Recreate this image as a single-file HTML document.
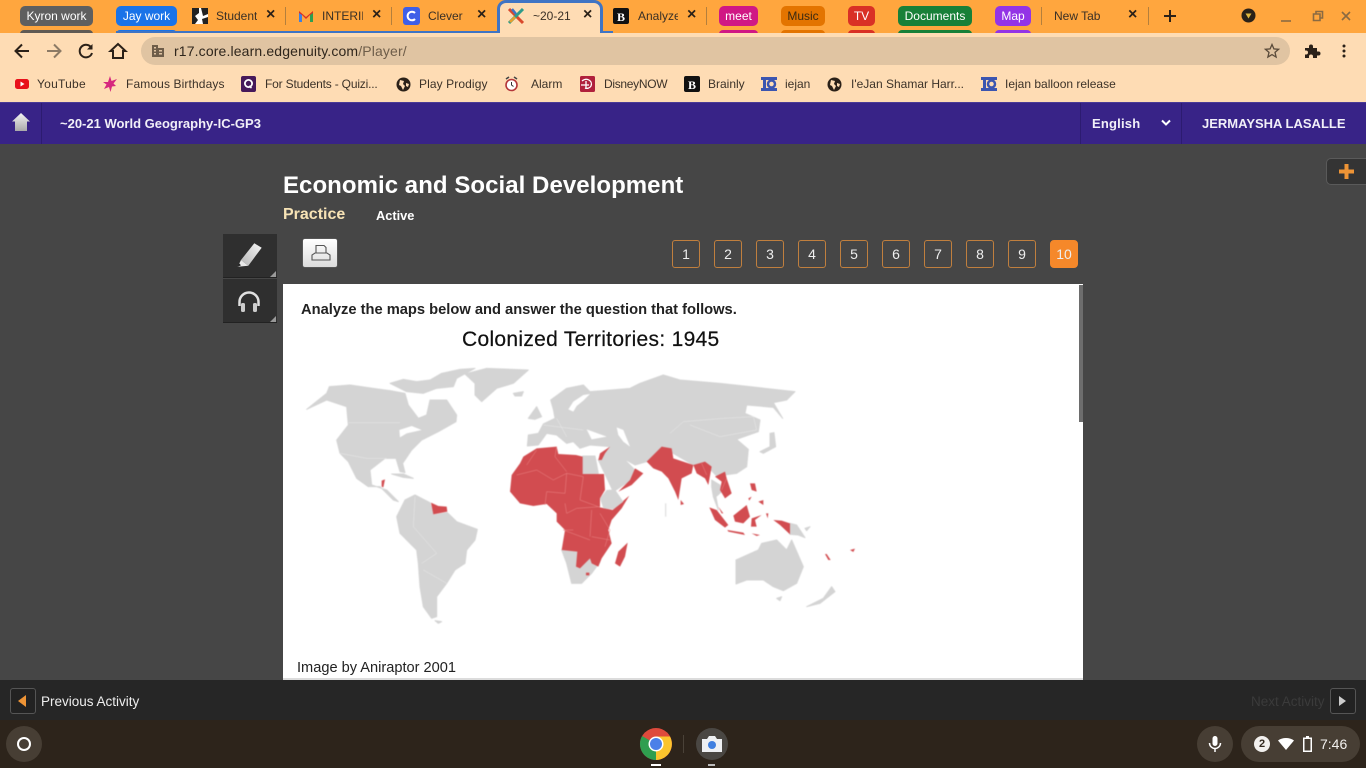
<!DOCTYPE html>
<html><head><meta charset="utf-8"><title>Player</title>
<style>
html,body{margin:0;padding:0;width:1366px;height:768px;overflow:hidden;background:#464646;font-family:"Liberation Sans",sans-serif}
.a{position:absolute}
.t{position:absolute;white-space:nowrap}
svg{position:absolute;overflow:visible}
.g{position:absolute;top:6px;height:20px;border-radius:5px;color:#fff;font-size:12px;line-height:20px;text-align:center}
.u{position:absolute;top:30px;height:4px;border-radius:4px 4px 0 0}
.tb{position:absolute;top:8px;font-size:12px;line-height:16px;color:#3a3026;white-space:nowrap;overflow:hidden}
.x{position:absolute;top:7px;font-size:16px;line-height:16px;color:#2b2118;font-weight:bold;margin-left:1px}
.sep{position:absolute;top:7px;width:1px;height:18px;background:#b47f3c}
.bm{position:absolute;top:76px;font-size:12px;line-height:16px;color:#3c3228;white-space:nowrap}
.n{position:absolute;top:240px;width:26px;height:26px;border:1px solid #c07f3e;border-radius:3px;color:#eee;font-size:14px;line-height:26px;text-align:center}
</style></head><body>

<!-- tab strip -->
<div class="a" style="left:0;top:0;width:1366px;height:33px;background:#ffa63e"></div>
<div class="u" style="left:20px;width:73px;background:#5f5a54"></div>
<div class="u" style="left:116px;width:61px;background:#1a73e8"></div>
<div class="u" style="left:719px;width:39px;background:#d01884"></div>
<div class="u" style="left:781px;width:44px;background:#e37400"></div>
<div class="u" style="left:848px;width:27px;background:#d93025"></div>
<div class="u" style="left:898px;width:74px;background:#188038"></div>
<div class="u" style="left:995px;width:36px;background:#9334e6"></div>
<div class="a" style="left:116px;top:31px;width:384px;height:2px;background:#3f74c4"></div>
<div class="a" style="left:600px;top:31px;width:13px;height:2px;background:#3f74c4"></div>

<div class="g" style="left:20px;width:73px;background:#5f5f5f">Kyron work</div>
<div class="g" style="left:116px;width:61px;background:#1a73e8">Jay work</div>

<svg style="left:191px;top:7px" width="18" height="18" viewBox="0 0 18 18"><rect x="1" y="1" width="16" height="16" fill="#fff"/><path d="M1 1h7v5l-4 3 3 4-3 4H1zM10 1h7v6l-5 2zM11 12l6-2v7h-5z" fill="#222"/></svg>
<div class="tb" style="left:216px;width:41px">Student</div><div class="x" style="left:265px">×</div>
<div class="sep" style="left:285px"></div>
<svg style="left:298px;top:9px" width="16" height="14" viewBox="0 0 16 14"><path d="M1 13V2l7 6 7-6v11h-3V6L8 10 4 6v7z" fill="#d93025"/><path d="M1 13V4l3 2v7z" fill="#3f7fe0"/><path d="M15 13V4l-3 2v7z" fill="#2f9e4f"/></svg>
<div class="tb" style="left:322px;width:41px">INTERIM</div><div class="x" style="left:371px">×</div>
<div class="sep" style="left:391px"></div>
<svg style="left:403px;top:7px" width="17" height="18" viewBox="0 0 17 18"><rect width="17" height="18" rx="3" fill="#3f5fe8"/><path d="M12 6a4.300 4.300 0 1 0 0 6" fill="none" stroke="#fff" stroke-width="2"/></svg>
<div class="tb" style="left:428px;width:38px">Clever |</div><div class="x" style="left:476px">×</div>

<!-- active tab -->
<div class="a" style="left:497px;top:0;width:106px;height:33px;background:#fedcb4;border:3px solid #3f74c4;border-bottom:none;border-radius:9px 9px 0 0;box-sizing:border-box"></div>
<svg style="left:507px;top:7px" width="18" height="18" viewBox="0 0 18 18"><path d="M2 2l14 14" stroke="#d9492c" stroke-width="3"/><path d="M16 2L2 16" stroke="#2e9b8a" stroke-width="3"/><path d="M5 2l4 5" stroke="#3f74c4" stroke-width="2.500"/><path d="M3 15l5-5" stroke="#e8a02c" stroke-width="2.500"/></svg>
<div class="tb" style="left:533px;width:38px">~20-21</div><div class="x" style="left:582px">×</div>

<svg style="left:613px;top:8px" width="16" height="16" viewBox="0 0 16 16"><rect width="16" height="16" rx="2" fill="#111"/><text x="4" y="13" font-family="Liberation Serif" font-weight="bold" font-size="12" fill="#fff">B</text></svg>
<div class="tb" style="left:638px;width:40px">Analyze</div><div class="x" style="left:686px">×</div>
<div class="sep" style="left:706px"></div>

<div class="g" style="left:719px;width:39px;background:#d01884">meet</div>
<div class="g" style="left:781px;width:44px;background:#e37400;color:#3a2a12">Music</div>
<div class="g" style="left:848px;width:27px;background:#d93025">TV</div>
<div class="g" style="left:898px;width:74px;background:#188038">Documents</div>
<div class="g" style="left:995px;width:36px;background:#9334e6">Map</div>
<div class="sep" style="left:1041px"></div>
<div class="tb" style="left:1054px;width:60px">New Tab</div><div class="x" style="left:1127px">×</div>
<div class="sep" style="left:1148px"></div>
<svg style="left:1162px;top:8px" width="16" height="16" viewBox="0 0 16 16"><path d="M8 2v12M2 8h12" stroke="#2b2118" stroke-width="2"/></svg>
<svg style="left:1241px;top:8px" width="15" height="15" viewBox="0 0 15 15"><circle cx="7.500" cy="7.500" r="7" fill="#2a2118"/><path d="M4.500 5.500h6l-3 5z" fill="#e0b840"/></svg>
<svg style="left:1280px;top:12px" width="12" height="12" viewBox="0 0 12 12"><path d="M1 9h10" stroke="#8a6a42" stroke-width="1.600"/></svg>
<svg style="left:1312px;top:10px" width="12" height="12" viewBox="0 0 12 12"><path d="M1.500 4h6.500v6.500H1.500zM4 4V1.500h6.500V8H8" fill="none" stroke="#8a6a42" stroke-width="1.600"/></svg>
<svg style="left:1340px;top:10px" width="12" height="12" viewBox="0 0 12 12"><path d="M2 2l8 8M10 2l-8 8" stroke="#8a6a42" stroke-width="1.600"/></svg>

<!-- toolbar -->
<div class="a" style="left:0;top:33px;width:1366px;height:69px;background:#fedcb4"></div>
<svg style="left:12px;top:41px" width="20" height="20" viewBox="0 0 20 20"><path d="M17 10H4M10 3.500L3.500 10l6.500 6.500" fill="none" stroke="#2b2118" stroke-width="2"/></svg>
<svg style="left:44px;top:41px" width="20" height="20" viewBox="0 0 20 20"><path d="M3 10h13M10 3.500l6.500 6.500-6.500 6.500" fill="none" stroke="#8c7a65" stroke-width="2"/></svg>
<svg style="left:76px;top:41px" width="20" height="20" viewBox="0 0 20 20"><path d="M15.500 7A6.300 6.300 0 1 0 16 12" fill="none" stroke="#2b2118" stroke-width="2"/><path d="M16.500 3v5.500H11z" fill="#2b2118"/></svg>
<svg style="left:108px;top:41px" width="20" height="20" viewBox="0 0 20 20"><path d="M10 3L2.500 10H5v7h10v-7h2.500z" fill="none" stroke="#2b2118" stroke-width="2"/></svg>
<div class="a" style="left:141px;top:37px;width:1149px;height:28px;background:#e0c4a2;border-radius:14px"></div>
<svg style="left:151px;top:44px" width="14" height="14" viewBox="0 0 14 14"><path d="M1 1h6v3h6v9H1zM3 3v1.500h2V3zM3 6v1.500h2V6zM3 9v1.500h2V9zM8 6v1.500h3V6zM8 9v1.500h3V9z" fill="#6e5d49" fill-rule="evenodd"/></svg>
<div class="t" style="left:174px;top:43px;font-size:14px;line-height:16px;letter-spacing:.14px;color:#2f261c">r17.core.learn.edgenuity.com<span style="color:#6e5d49">/Player/</span></div>
<svg style="left:1264px;top:43px" width="16" height="16" viewBox="0 0 16 16"><path d="M8 1.500l1.900 4.400 4.700.4-3.600 3.100 1.100 4.600L8 11.600 3.900 14l1.100-4.600-3.600-3.100 4.700-.4z" fill="none" stroke="#5a4b3a" stroke-width="1.300"/></svg>
<svg style="left:1304px;top:43px" width="16" height="16" viewBox="0 0 16 16"><path d="M1 5h4V3.500a2 2 0 0 1 4 0V5h4v3.500h1.500a2 2 0 0 1 0 4H13V15H9v-1.500a2 2 0 0 0-4 0V15H1v-3.500h1a2 2 0 0 0 0-4H1z" fill="#2b2118"/></svg>
<svg style="left:1342px;top:44px" width="4" height="14" viewBox="0 0 4 14"><circle cx="2" cy="2" r="1.500" fill="#2b2118"/><circle cx="2" cy="7" r="1.500" fill="#2b2118"/><circle cx="2" cy="12" r="1.500" fill="#2b2118"/></svg>

<!-- bookmarks -->
<svg style="left:15px;top:79px" width="14" height="10" viewBox="0 0 14 10"><rect width="14" height="10" rx="2.500" fill="#e8101a"/><path d="M5.500 2.500l4 2.500-4 2.500z" fill="#fff"/></svg>
<div class="bm" style="left:37px;letter-spacing:.25px">YouTube</div>
<svg style="left:102px;top:76px" width="16" height="16" viewBox="0 0 16 16"><path d="M8 0l1.500 5L15 3l-3.500 4.500L14 10l-4 .5L8.500 16 7 11l-5 2 2.500-4.500L1 6l5 0z" fill="#d6287e"/></svg>
<div class="bm" style="left:126px;letter-spacing:.12px">Famous Birthdays</div>
<svg style="left:241px;top:76px" width="15" height="16" viewBox="0 0 15 16"><rect width="15" height="16" rx="2" fill="#46195a"/><circle cx="7.500" cy="7.500" r="3.600" fill="none" stroke="#fff" stroke-width="1.800"/><path d="M8 10l2.500 2" stroke="#fff" stroke-width="1.500"/></svg>
<div class="bm" style="left:265px;letter-spacing:-.18px">For Students - Quizi...</div>
<svg style="left:396px;top:77px" width="15" height="15" viewBox="0 0 15 15"><circle cx="7.500" cy="7.500" r="7" fill="#2b2118"/><path d="M4 3l4 1-1 3 2 2-2 4-2-4-2-1zM10 6l3 1-1 3-2-1z" fill="#fedcb4"/></svg>
<div class="bm" style="left:419px;letter-spacing:.1px">Play Prodigy</div>
<svg style="left:504px;top:76px" width="15" height="16" viewBox="0 0 15 16"><circle cx="7.500" cy="9" r="5.500" fill="#fff" stroke="#b3363a" stroke-width="1.600"/><path d="M7.500 6v3l2 1.500" stroke="#333" fill="none"/><path d="M2 3l3-2M13 3l-3-2" stroke="#444" stroke-width="1.600"/></svg>
<div class="bm" style="left:531px">Alarm</div>
<svg style="left:580px;top:76px" width="15" height="16" viewBox="0 0 15 16"><rect width="15" height="16" rx="1.500" fill="#b0203c"/><path d="M2 5c5-4 11 0 9 5-1 2-4 3-6 2M6 5v7M1 9h8" fill="none" stroke="#fff" stroke-width="1.300"/></svg>
<div class="bm" style="left:604px;letter-spacing:-.3px">DisneyNOW</div>
<svg style="left:684px;top:76px" width="16" height="16" viewBox="0 0 16 16"><rect width="16" height="16" rx="2" fill="#111"/><text x="4" y="13" font-family="Liberation Serif" font-weight="bold" font-size="12" fill="#fff">B</text></svg>
<div class="bm" style="left:708px">Brainly</div>
<svg style="left:761px;top:76px" width="16" height="16" viewBox="0 0 16 16"><rect y="1" width="16" height="3" fill="#3b55b0"/><rect y="12" width="16" height="3" fill="#3b55b0"/><rect x="2" y="4" width="3" height="8" fill="#3b55b0"/><circle cx="10.500" cy="8" r="3.500" fill="none" stroke="#3b55b0" stroke-width="2.500"/></svg>
<div class="bm" style="left:785px">iejan</div>
<svg style="left:827px;top:77px" width="15" height="15" viewBox="0 0 15 15"><circle cx="7.500" cy="7.500" r="7" fill="#2b2118"/><path d="M4 3l4 1-1 3 2 2-2 4-2-4-2-1zM10 6l3 1-1 3-2-1z" fill="#fedcb4"/></svg>
<div class="bm" style="left:851px">I'eJan Shamar Harr...</div>
<svg style="left:981px;top:76px" width="16" height="16" viewBox="0 0 16 16"><rect y="1" width="16" height="3" fill="#3b55b0"/><rect y="12" width="16" height="3" fill="#3b55b0"/><rect x="2" y="4" width="3" height="8" fill="#3b55b0"/><circle cx="10.500" cy="8" r="3.500" fill="none" stroke="#3b55b0" stroke-width="2.500"/></svg>
<div class="bm" style="left:1005px">Iejan balloon release</div>

<!-- purple header -->
<div class="a" style="left:0;top:102px;width:1366px;height:42px;background:#382387;border-top:1px solid #4a3a96;box-sizing:border-box"></div>
<div class="a" style="left:41px;top:103px;width:1px;height:41px;background:#2c1b70"></div>
<div class="a" style="left:1080px;top:103px;width:1px;height:41px;background:#2c1b70"></div>
<div class="a" style="left:1181px;top:103px;width:1px;height:41px;background:#2c1b70"></div>
<svg style="left:11px;top:112px" width="20" height="20" viewBox="0 0 20 20"><defs><linearGradient id="h" x1="0" y1="0" x2="0" y2="1"><stop offset="0" stop-color="#f4f4f4"/><stop offset="1" stop-color="#a9a9a9"/></linearGradient></defs><path d="M10 1L1 9.500h3V19h12V9.500h3z" fill="url(#h)"/></svg>
<div class="t" style="left:60px;top:116px;font-size:13px;line-height:16px;font-weight:bold;color:#f1eff8">~20-21 World Geography-IC-GP3</div>
<div class="t" style="left:1092px;top:116px;font-size:13px;line-height:16px;letter-spacing:.2px;font-weight:bold;color:#f1eff8">English</div>
<svg style="left:1161px;top:119px" width="10" height="8" viewBox="0 0 10 8"><path d="M1 1.500l4 4 4-4" fill="none" stroke="#fff" stroke-width="2"/></svg>
<div class="t" style="left:1202px;top:116px;font-size:13px;line-height:16px;font-weight:bold;color:#f1eff8">JERMAYSHA LASALLE</div>

<!-- right plus -->
<div class="a" style="left:1326px;top:158px;width:50px;height:27px;background:#343434;border:1px solid #5a5a5a;border-radius:5px;box-sizing:border-box"></div>
<svg style="left:1339px;top:164px" width="15" height="15" viewBox="0 0 15 15"><path d="M5.500 0h4v5.500H15v4H9.500V15h-4V9.500H0v-4h5.500z" fill="#ee9436"/></svg>

<!-- titles -->
<div class="t" style="left:283px;top:171px;font-size:24px;line-height:29px;font-weight:bold;color:#fff;letter-spacing:.05px">Economic and Social Development</div>
<div class="t" style="left:283px;top:206px;font-size:16px;line-height:18px;font-weight:bold;color:#f7e3b5">Practice</div>
<div class="t" style="left:376px;top:208px;font-size:12.800px;line-height:15px;font-weight:bold;color:#fff">Active</div>

<!-- side tools -->
<div class="a" style="left:223px;top:234px;width:54px;height:43px;background:#2f2f2f;border-bottom:1px solid #222"></div>
<div class="a" style="left:223px;top:279px;width:54px;height:43px;background:#2f2f2f;border-bottom:1px solid #222"></div>
<svg style="left:270px;top:271px" width="6" height="6"><path d="M6 0v6H0z" fill="#999"/></svg>
<svg style="left:270px;top:316px" width="6" height="6"><path d="M6 0v6H0z" fill="#999"/></svg>
<svg style="left:236px;top:242px" width="27" height="27" viewBox="0 0 27 27"><defs><linearGradient id="p" x1="1" y1="0" x2="0" y2="1"><stop offset="0" stop-color="#f6f6f6"/><stop offset="1" stop-color="#b5b5b5"/></linearGradient></defs><path d="M18.300 1.300L25.700 5.700 12.300 23.700 5 18z" fill="url(#p)"/><path d="M5 18l7.300 5.700-10.600 1z" fill="#e8e8e8"/><path d="M1.700 24.700l1.300-3.400 2 2z" fill="#222"/></svg>
<svg style="left:236px;top:290px" width="26" height="24" viewBox="0 0 26 24"><path d="M3.500 16V12a9.500 9.500 0 0 1 19 0v4" fill="none" stroke="#e0e0e0" stroke-width="2.500"/><rect x="5" y="13" width="4" height="9" rx="1.500" fill="#ccc"/><rect x="17" y="13" width="4" height="9" rx="1.500" fill="#ccc"/></svg>

<!-- print -->
<div class="a" style="left:303px;top:239px;width:34px;height:28px;border-radius:2px;background:linear-gradient(#fff,#dcdcdc);box-shadow:0 0 1px #aaa"></div>
<svg style="left:311px;top:244px" width="20" height="17" viewBox="0 0 20 17"><path d="M5 9V1.500h8l2 2V9M1 16v-5l3-2h12l3 2v5z" fill="none" stroke="#555" stroke-width="1.100"/></svg>

<!-- pagination -->
<div class="n" style="left:672px">1</div>
<div class="n" style="left:714px">2</div>
<div class="n" style="left:756px">3</div>
<div class="n" style="left:798px">4</div>
<div class="n" style="left:840px">5</div>
<div class="n" style="left:882px">6</div>
<div class="n" style="left:924px">7</div>
<div class="n" style="left:966px">8</div>
<div class="n" style="left:1008px">9</div>
<div class="n" style="left:1050px;background:#f5882a;border-color:#f5882a;border-radius:4px">10</div>

<!-- content -->
<div class="a" style="left:283px;top:284px;width:800px;height:394px;background:#fff"></div>
<div class="a" style="left:283px;top:678px;width:800px;height:2px;background:#dcdcdc"></div>
<div class="a" style="left:1079px;top:285px;width:4px;height:137px;background:#6d6d6d"></div>
<div class="t" style="left:301px;top:301px;font-size:14.700px;line-height:18px;font-weight:bold;color:#222">Analyze the maps below and answer the question that follows.</div>
<div class="t" style="left:462px;top:328px;font-size:21px;line-height:24px;letter-spacing:.3px;color:#111;-webkit-text-stroke:.2px #111">Colonized Territories: 1945</div>

<svg style="left:0;top:0;filter:blur(.4px)" width="1366" height="768" viewBox="0 0 1366 768">
<g transform="translate(290,350) scale(.33333)" stroke-linejoin="round">
 <g fill="#d4d4d4" stroke="#d4d4d4" stroke-width="3">
 <!-- North America -->
 <path d="M50,178 L85,150 L110,130 L118,110 L180,105 L250,115 L300,122 L345,130 L355,165 L385,205 L410,195 L420,150 L470,150 L500,195 L498,215 L445,245 L395,270 L365,300 L338,340 L345,368 L330,365 L318,325 L285,325 L240,360 L245,405 L290,420 L325,455 L310,450 L270,410 L235,410 L200,385 L175,335 L150,310 L140,270 L175,225 L170,170 L110,150 Z"/>
 <path d="M300,100 L340,88 L380,95 L420,90 L455,70 L510,58 L555,55 L500,85 L490,110 L440,115 L400,130 L350,125 Z"/>
 <path d="M525,72 L590,55 L715,60 L670,100 L620,115 L575,155 L555,135 L555,100 Z"/>
 <path d="M670,130 L700,125 L695,138 L675,138Z"/>
 <path d="M305,372 L340,372 L370,385 L340,382Z"/>
 <!-- South America -->
 <path d="M320,500 L345,450 L375,435 L420,458 L430,495 L472,488 L500,515 L562,538 L555,570 L530,600 L525,640 L495,660 L470,700 L440,740 L440,800 L425,805 L400,770 L390,710 L385,640 L380,600 L330,550 Z"/>
 <path d="M435,812 L455,815 L445,820Z"/>
 <!-- Britain -->
 <path d="M715,205 L740,170 L755,200 L735,208Z"/>
 <!-- Eurasia -->
 <path d="M712,288 L715,255 L745,250 L760,222 L795,205 L790,178 L782,150 L830,115 L880,105 L900,125 L940,122 L1020,115 L1050,100 L1120,75 L1170,90 L1290,100 L1380,110 L1515,125 L1490,150 L1450,158 L1478,205 L1450,172 L1370,165 L1365,190 L1410,210 L1405,245 L1340,268 L1375,298 L1370,350 L1340,370 L1280,378 L1240,335 L1210,345 L1115,290 L1070,335 L1035,345 L1000,325 L1030,355 L1035,365 L1030,385 L970,425 L925,330 L960,290 L900,285 L870,295 L850,275 L830,280 L800,255 L770,250 L745,285 Z"/>
 <path d="M1265,390 L1290,405 L1295,425 L1278,440 L1285,480 L1270,440 L1265,410Z"/>
 <path d="M1440,250 L1452,248 L1457,290 L1420,310 L1410,305 L1440,290Z"/>
 <path d="M878,318 L915,318 L925,370 L878,372Z"/>
 <path d="M815,600 L870,600 L930,635 L905,670 L875,700 L845,700 L830,640Z"/>
 <!-- Australasia -->
 <path d="M1338,630 L1405,600 L1415,580 L1460,570 L1490,600 L1505,570 L1540,650 L1520,700 L1480,722 L1450,710 L1420,690 L1370,690 L1338,702 Z"/>
 <path d="M1550,770 L1600,745 L1625,710 L1635,725 L1590,760Z"/>
 <path d="M1460,745 L1475,740 L1470,752Z"/>
 <path d="M1500,520 L1520,525 L1545,563 L1525,555 L1500,553Z"/>
 <path d="M1545,535 L1560,530 L1550,542Z"/>
 </g>
 <!-- water -->
 <g fill="#fff">
 <path d="M835,178 L850,155 L880,135 L900,132 L880,152 L860,168 L850,185Z"/>
 <path d="M980,232 L1000,240 L1020,290 L1000,275 L985,255Z"/>
 <path d="M890,238 L950,260 L905,268Z"/>
 <path d="M328,240 L365,228 L395,240 L350,250 L330,262Z"/>
 </g>
 <g fill="none" stroke="#e9e9e9" stroke-width="1.500">
 <path d="M175,218 L330,218 M150,310 L230,325 L290,325"/>
 <path d="M1140,250 L1180,215 L1300,205 L1390,200 L1400,240 L1290,260 L1200,225"/>
 <path d="M375,440 L370,530 L440,610 L395,640 M470,700 L400,660"/>
 <path d="M760,225 L880,240 M800,205 L830,260"/>
 </g>
 <!-- red -->
 <g fill="#d24c50">
 <path d="M700,320 L740,295 L800,290 L805,312 L858,315 L878,320 L878,372 L942,372 L945,420 L930,445 L930,472 L968,480 L1018,437 L995,475 L965,510 L955,540 L965,580 L935,625 L925,650 L905,640 L900,625 L870,655 L858,650 L862,605 L815,600 L825,540 L800,515 L800,490 L770,462 L730,468 L690,460 L660,425 L665,375 L690,340 Z"/>
 <path d="M423,458 L445,468 L470,470 L472,485 L430,493Z"/>
 <path d="M1035,355 L1060,370 L1025,405 L985,425 L1020,390Z"/>
 <path d="M925,330 L930,310 L960,290 L945,310 L935,330Z"/>
 <path d="M1070,335 L1115,290 L1145,295 L1150,325 L1210,345 L1205,370 L1175,385 L1165,450 L1155,425 L1135,385 L1115,365 L1090,355Z"/>
 <path d="M1210,345 L1245,335 L1265,350 L1255,405 L1245,385 L1220,370Z"/>
 <path d="M1275,380 L1305,365 L1310,385 L1325,430 L1305,445 L1290,420 L1295,395Z"/>
 <path d="M1172,450 L1182,462 L1172,465Z"/>
 <path d="M1258,472 L1280,480 L1315,525 L1305,533 L1275,510Z"/>
 <path d="M1285,470 L1300,490 L1295,490Z"/>
 <path d="M1312,540 L1360,548 L1365,555 L1315,545Z"/>
 <path d="M1385,550 L1410,555 L1400,558Z"/>
 <path d="M1330,497 L1370,465 L1380,500 L1360,520 L1335,515Z"/>
 <path d="M1385,505 L1415,495 L1395,510 L1400,530 L1383,530Z"/>
 <path d="M1380,400 L1395,400 L1400,425 L1385,420Z"/>
 <path d="M1405,455 L1420,450 L1420,465Z"/>
 <path d="M1375,445 L1385,440 L1378,452Z"/>
 <path d="M1450,510 L1475,512 L1500,520 L1500,553 L1470,525Z"/>
 <path d="M1428,490 L1435,490 L1433,505Z"/>
 <path d="M975,640 L985,605 L1013,578 L1005,620 L990,650Z"/>
 <path d="M1605,612 L1610,612 L1622,630 L1615,630Z"/>
 <path d="M1680,600 L1695,596 L1690,606Z"/>
 <path d="M275,392 L285,388 L280,412 L275,410Z"/>
 <path d="M888,668 L898,668 L898,676 L888,676Z"/>
 </g>
 <g fill="#d4d4d4"><path d="M930,445 L950,420 L975,418 L1000,455 L970,478 L940,475Z"/></g>
 <g fill="none" stroke="#ea8585" stroke-width="1.500">
 <path d="M680,375 L740,360 L790,390 L830,370 L880,380 M830,370 L825,430 L770,425 L765,465 M880,380 L870,450 L930,472 M825,460 L830,490 L860,475 L930,470 M800,290 L795,320 L830,365 M740,300 L710,345 M850,540 L820,540 L900,570 M905,480 L900,560 M930,490 L960,540 L945,590 M905,560 L960,570"/>
 <path d="M1235,340 L1250,375 M1310,385 L1295,420"/>
 </g>
 <g fill="#e2e2e2"><path d="M1125,460h4v40h-4z"/></g>
</g>
</svg>

<div class="t" style="left:297px;top:659px;font-size:14.600px;line-height:18px;color:#222">Image by Aniraptor 2001</div>

<!-- footer -->
<div class="a" style="left:0;top:680px;width:1366px;height:40px;background:#262626"></div>
<div class="a" style="left:10px;top:688px;width:26px;height:26px;box-sizing:border-box;background:#222;border:1px solid #555;border-radius:3px"></div>
<svg style="left:18px;top:695px" width="9" height="12"><path d="M8 0v12L0 6z" fill="#ee9436"/></svg>
<div class="t" style="left:41px;top:694px;font-size:13.500px;line-height:16px;color:#eee">Previous Activity</div>
<div class="t" style="left:1251px;top:694px;font-size:13.500px;line-height:16px;color:#3b3b3b">Next Activity</div>
<div class="a" style="left:1330px;top:688px;width:26px;height:26px;box-sizing:border-box;background:#222;border:1px solid #555;border-radius:3px"></div>
<svg style="left:1339px;top:696px" width="8" height="10"><path d="M0 0v10l7-5z" fill="#ccc"/></svg>

<!-- shelf -->
<div class="a" style="left:0;top:720px;width:1366px;height:48px;background:#2d241b"></div>
<div class="a" style="left:6px;top:726px;width:36px;height:36px;border-radius:50%;background:#473e34"></div>
<div class="a" style="left:17px;top:737px;width:14px;height:14px;border:2px solid #fff;border-radius:50%;box-sizing:border-box"></div>

<svg style="left:640px;top:728px" width="32" height="32" viewBox="0 0 32 32">
<circle cx="16" cy="16" r="16" fill="#de4a3c"/>
<path d="M16 16L2.100 8A16 16 0 0 0 16 32z" fill="#2f9e4f"/>
<path d="M16 16L16 32A16 16 0 0 0 30 8.500L16 8.500z" fill="#fbc42d"/>
<circle cx="16" cy="16" r="7.500" fill="#fff"/><circle cx="16" cy="16" r="6" fill="#4a80e8"/></svg>
<div class="a" style="left:651px;top:764px;width:10px;height:2px;background:#fff"></div>
<div class="a" style="left:683px;top:735px;width:1px;height:18px;background:#4a4238"></div>
<svg style="left:696px;top:728px" width="32" height="32" viewBox="0 0 32 32">
<circle cx="16" cy="16" r="16" fill="#4a4743"/>
<path d="M6 11h5l2-3h6l2 3h5v13H6z" fill="#eef0f3"/><circle cx="16" cy="17" r="4" fill="#3f7fe0"/></svg>
<div class="a" style="left:708px;top:764px;width:7px;height:2px;background:#bbb"></div>

<div class="a" style="left:1197px;top:726px;width:36px;height:36px;border-radius:50%;background:#473e34"></div>
<svg style="left:1208px;top:735px" width="14" height="18" viewBox="0 0 14 18"><rect x="4.500" y="1" width="5" height="10" rx="2.500" fill="#fff"/><path d="M1.500 8a5.500 5.500 0 0 0 11 0M7 13.500V17" fill="none" stroke="#fff" stroke-width="1.500"/></svg>
<div class="a" style="left:1241px;top:726px;width:119px;height:36px;border-radius:18px;background:#473e34"></div>
<div class="a" style="left:1254px;top:736px;width:16px;height:16px;border-radius:50%;background:#f2f0ee;color:#33291f;font-size:11px;font-weight:bold;line-height:16px;text-align:center">2</div>
<svg style="left:1278px;top:738px" width="16" height="12" viewBox="0 0 16 12"><path d="M0 2.500C4.500-.8 11.500-.8 16 2.500L8 12z" fill="#fff"/></svg>
<svg style="left:1303px;top:736px" width="9" height="16" viewBox="0 0 9 16"><path d="M3 0h3v1.500h3V16H0V1.500h3z" fill="#fff"/><rect x="1.500" y="3" width="6" height="11.500" fill="#473e34"/></svg>
<div class="t" style="left:1320px;top:736px;font-size:14px;line-height:16px;color:#f2f0ee">7:46</div>

</body></html>
